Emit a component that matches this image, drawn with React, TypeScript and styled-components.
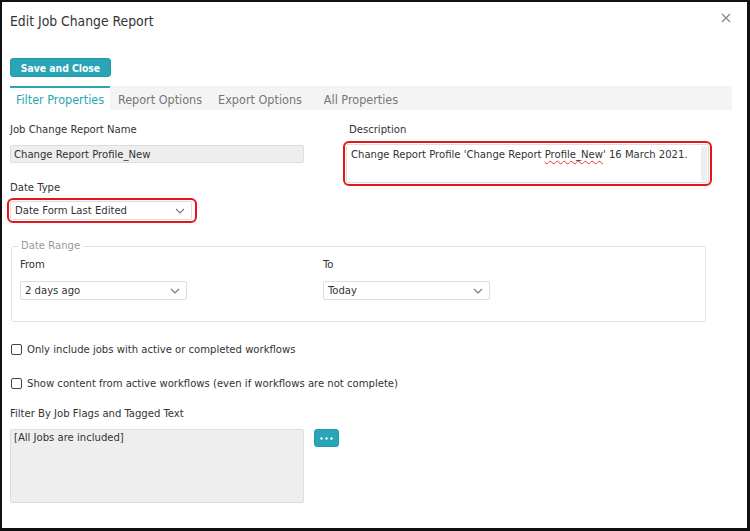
import React from "react";
import styled, { createGlobalStyle } from "styled-components";

const GlobalStyle = createGlobalStyle`
  html, body {
    margin: 0;
    padding: 0;
    background: #fff;
  }
  body {
    font-family: "DejaVu Sans Condensed", "DejaVu Sans", Tahoma, sans-serif;
    font-size: 11.2px;
    color: #333;
  }
  * {
    box-sizing: border-box;
  }
`;

const teal = "#2aa5b5";
const base = "11.2px";

const Dialog = styled.div`
  width: 750px;
  height: 531px;
  border: 2px solid #111;
  border-right-width: 3px;
  border-bottom-width: 3px;
  background: #fff;
  display: flex;
  flex-direction: column;
  padding: 0 15px 0 8px;
`;

const Header = styled.div`
  display: flex;
  align-items: center;
  justify-content: space-between;
  height: 38px;
`;

const Title = styled.h1`
  margin: 0;
  font-size: 13.8px;
  font-weight: normal;
  color: #333;
`;

const CloseButton = styled.button`
  border: none;
  background: transparent;
  padding: 0;
  width: 14px;
  height: 14px;
  margin-top: -6px;
  margin-right: -1px;
  display: flex;
  align-items: center;
  justify-content: center;
  cursor: pointer;
`;

const Toolbar = styled.div`
  margin-top: 18px;
  display: flex;
`;

const PrimaryButton = styled.button`
  background: ${teal};
  color: #fff;
  border: 1px solid #2399a9;
  border-radius: 3px;
  font-family: inherit;
  font-weight: bold;
  font-size: 10.3px;
  height: 19px;
  width: 101px;
  padding: 0;
  cursor: pointer;
`;

const TabBar = styled.div`
  margin-top: 9px;
  display: flex;
  height: 24px;
  background: #f4f4f4;
`;

const Tab = styled.div<{ $active?: boolean; $w: number }>`
  width: ${(p) => p.$w}px;
  display: flex;
  align-items: center;
  justify-content: center;
  font-size: 12.5px;
  color: ${(p) => (p.$active ? teal : "#777")};
  background: ${(p) => (p.$active ? "#fff" : "transparent")};
  border-top: 2px solid ${(p) => (p.$active ? teal : "transparent")};
`;

const Columns = styled.div`
  display: flex;
  margin-top: 13px;
`;

const LeftCol = styled.div`
  width: 333px;
  display: flex;
  flex-direction: column;
`;

const RightCol = styled.div`
  display: flex;
  flex-direction: column;
  width: 369px;
`;

const Label = styled.div<{ $indent?: number }>`
  font-size: ${base};
  color: #333;
  line-height: 14px;
  padding-left: ${(p) => p.$indent ?? 0}px;
`;

const TextInput = styled.div`
  margin-top: 8px;
  width: 294px;
  height: 18px;
  background: #eee;
  border: 1px solid #ddd;
  border-radius: 2px;
  display: flex;
  align-items: center;
  padding-left: 3px;
  font-size: ${base};
  color: #333;
`;

const Highlight = styled.div<{ $w: number }>`
  width: ${(p) => p.$w}px;
  border: 2px solid #e8141c;
  border-radius: 6px;
  padding: 1px;
`;

const TextArea = styled.div`
  height: 39px;
  border: 1px solid #ddd;
  border-radius: 2px;
  position: relative;
  padding: 3px 4px;
  font-size: ${base};
  color: #333;
  white-space: nowrap;
  &::after {
    content: "";
    position: absolute;
    right: 1px;
    top: 1px;
    bottom: 1px;
    width: 6px;
    background: #eee;
  }
`;

const Squiggle = styled.span`
  text-decoration: underline wavy #e33;
  text-decoration-thickness: 1px;
  text-underline-offset: 2px;
`;

const SelectBox = styled.div<{ $w: number }>`
  width: ${(p) => p.$w}px;
  height: 19px;
  border: 1px solid #ddd;
  border-radius: 2px;
  background: #fff;
  display: flex;
  align-items: center;
  justify-content: space-between;
  padding: 0 6px 0 4px;
  font-size: ${base};
  color: #333;
`;

const Fieldset = styled.fieldset`
  margin: 17px 0 0 1px;
  width: 695px;
  height: 82px;
  border: 1px solid #dde3e6;
  border-radius: 3px;
  padding: 0 8px;
  display: flex;
`;

const Legend = styled.legend`
  font-size: ${base};
  color: #999;
  padding: 0 3px;
  margin-left: -2px;
  line-height: 12px;
`;

const RangeCol = styled.div<{ $w: number }>`
  width: ${(p) => p.$w}px;
  display: flex;
  flex-direction: column;
  gap: 9px;
  padding-top: 6px;
`;

const CheckRow = styled.label<{ $top: number }>`
  display: flex;
  align-items: center;
  gap: 5px;
  margin: ${(p) => p.$top}px 0 0 1px;
  font-size: ${base};
  color: #333;
`;

const CheckBox = styled.span`
  width: 11px;
  height: 11px;
  border: 1px solid #444;
  border-radius: 2px;
  background: #fff;
`;

const FilterRow = styled.div`
  display: flex;
  gap: 10px;
  margin-top: 8px;
`;

const FilterBox = styled.div`
  width: 294px;
  height: 74px;
  background: #eee;
  border: 1px solid #ddd;
  border-radius: 2px;
  padding: 1px 3px;
  font-size: ${base};
  color: #333;
`;

const DotsButton = styled.button`
  width: 25px;
  height: 18px;
  border: 1px solid #2399a9;
  border-radius: 3px;
  background: ${teal};
  display: flex;
  align-items: center;
  justify-content: center;
  padding: 0;
  cursor: pointer;
`;

const Chevron = () => (
  <svg width="10" height="6" viewBox="0 0 10 6">
    <path d="M1 1 L5 5 L9 1" fill="none" stroke="#777" strokeWidth="1.1" />
  </svg>
);

export default function App() {
  return (
    <>
      <GlobalStyle />
      <Dialog>
        <Header>
          <Title>Edit Job Change Report</Title>
          <CloseButton aria-label="Close">
            <svg width="10" height="10" viewBox="0 0 10 10">
              <path d="M1 1 L9 9 M9 1 L1 9" stroke="#888" strokeWidth="1.3" />
            </svg>
          </CloseButton>
        </Header>

        <Toolbar>
          <PrimaryButton>Save and Close</PrimaryButton>
        </Toolbar>

        <TabBar>
          <Tab $active $w={100}>Filter Properties</Tab>
          <Tab $w={100}>Report Options</Tab>
          <Tab $w={100}>Export Options</Tab>
          <Tab $w={102}>All Properties</Tab>
        </TabBar>

        <Columns>
          <LeftCol>
            <Label>Job Change Report Name</Label>
            <TextInput>Change Report Profile_New</TextInput>
            <Label style={{ marginTop: 18 }}>Date Type</Label>
            <Highlight $w={190} style={{ marginTop: 3, marginLeft: -3 }}>
              <SelectBox $w={182}>
                Date Form Last Edited
                <Chevron />
              </SelectBox>
            </Highlight>
          </LeftCol>
          <RightCol>
            <Label $indent={6}>Description</Label>
            <Highlight $w={369} style={{ marginTop: 4 }}>
              <TextArea>
                Change Report Profile 'Change Report <Squiggle>Profile_New</Squiggle>' 16 March 2021.
              </TextArea>
            </Highlight>
          </RightCol>
        </Columns>

        <Fieldset>
          <Legend>Date Range</Legend>
          <RangeCol $w={303}>
            <Label>From</Label>
            <SelectBox $w={167}>
              2 days ago
              <Chevron />
            </SelectBox>
          </RangeCol>
          <RangeCol $w={200}>
            <Label>To</Label>
            <SelectBox $w={167}>
              Today
              <Chevron />
            </SelectBox>
          </RangeCol>
        </Fieldset>

        <CheckRow $top={21}>
          <CheckBox />
          Only include jobs with active or completed workflows
        </CheckRow>
        <CheckRow $top={21}>
          <CheckBox />
          Show content from active workflows (even if workflows are not complete)
        </CheckRow>

        <Label style={{ marginTop: 17 }}>Filter By Job Flags and Tagged Text</Label>
        <FilterRow>
          <FilterBox>[All Jobs are included]</FilterBox>
          <DotsButton aria-label="More">
            <svg width="13" height="3" viewBox="0 0 13 3">
              <circle cx="1.5" cy="1.5" r="1.2" fill="#fff" />
              <circle cx="6.5" cy="1.5" r="1.2" fill="#fff" />
              <circle cx="11.5" cy="1.5" r="1.2" fill="#fff" />
            </svg>
          </DotsButton>
        </FilterRow>
      </Dialog>
    </>
  );
}
